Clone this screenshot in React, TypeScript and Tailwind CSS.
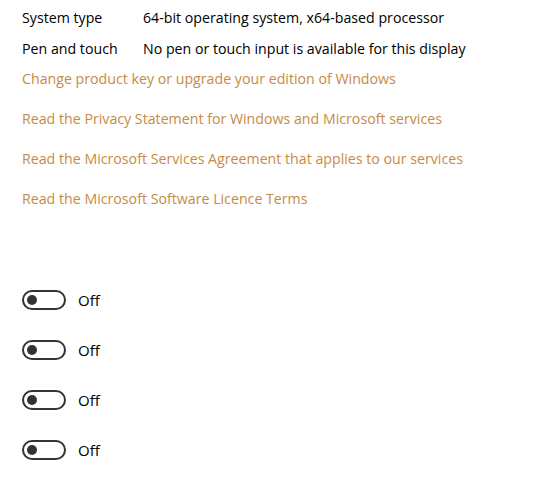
import React from "react";

const specs = [
  { label: "System type", value: "64-bit operating system, x64-based processor" },
  { label: "Pen and touch", value: "No pen or touch input is available for this display" },
];

const links = [
  "Change product key or upgrade your edition of Windows",
  "Read the Privacy Statement for Windows and Microsoft services",
  "Read the Microsoft Services Agreement that applies to our services",
  "Read the Microsoft Software Licence Terms",
];

function Toggle() {
  return (
    <div className="flex items-center h-[50px]">
      <div className="w-[44px] h-[20px] rounded-full border-2 border-[#333333] flex items-center pl-[3px]">
        <div className="w-[10px] h-[10px] rounded-full bg-[#333333]" />
      </div>
      <span className="ml-[12px] text-[15px] text-black">Off</span>
    </div>
  );
}

export default function App() {
  return (
    <div
      className="w-[536px] h-[482px] bg-white pl-[22px] overflow-hidden"
      style={{ fontFamily: '"Open Sans", "Noto Sans", sans-serif' }}
    >
      <div className="pt-[2px]">
        {specs.map((s) => (
          <div key={s.label} className="flex h-[31px] items-center text-[14.2px] text-black">
            <span className="w-[121px] shrink-0">{s.label}</span>
            <span>{s.value}</span>
          </div>
        ))}
      </div>
      <div className="-mt-[5px]">
        {links.map((l) => (
          <div key={l} className="h-[40px] flex items-center text-[14.2px] text-[#c68b45]">
            {l}
          </div>
        ))}
      </div>
      <div className="mt-[56px]">
        {[0, 1, 2, 3].map((i) => (
          <Toggle key={i} />
        ))}
      </div>
    </div>
  );
}
